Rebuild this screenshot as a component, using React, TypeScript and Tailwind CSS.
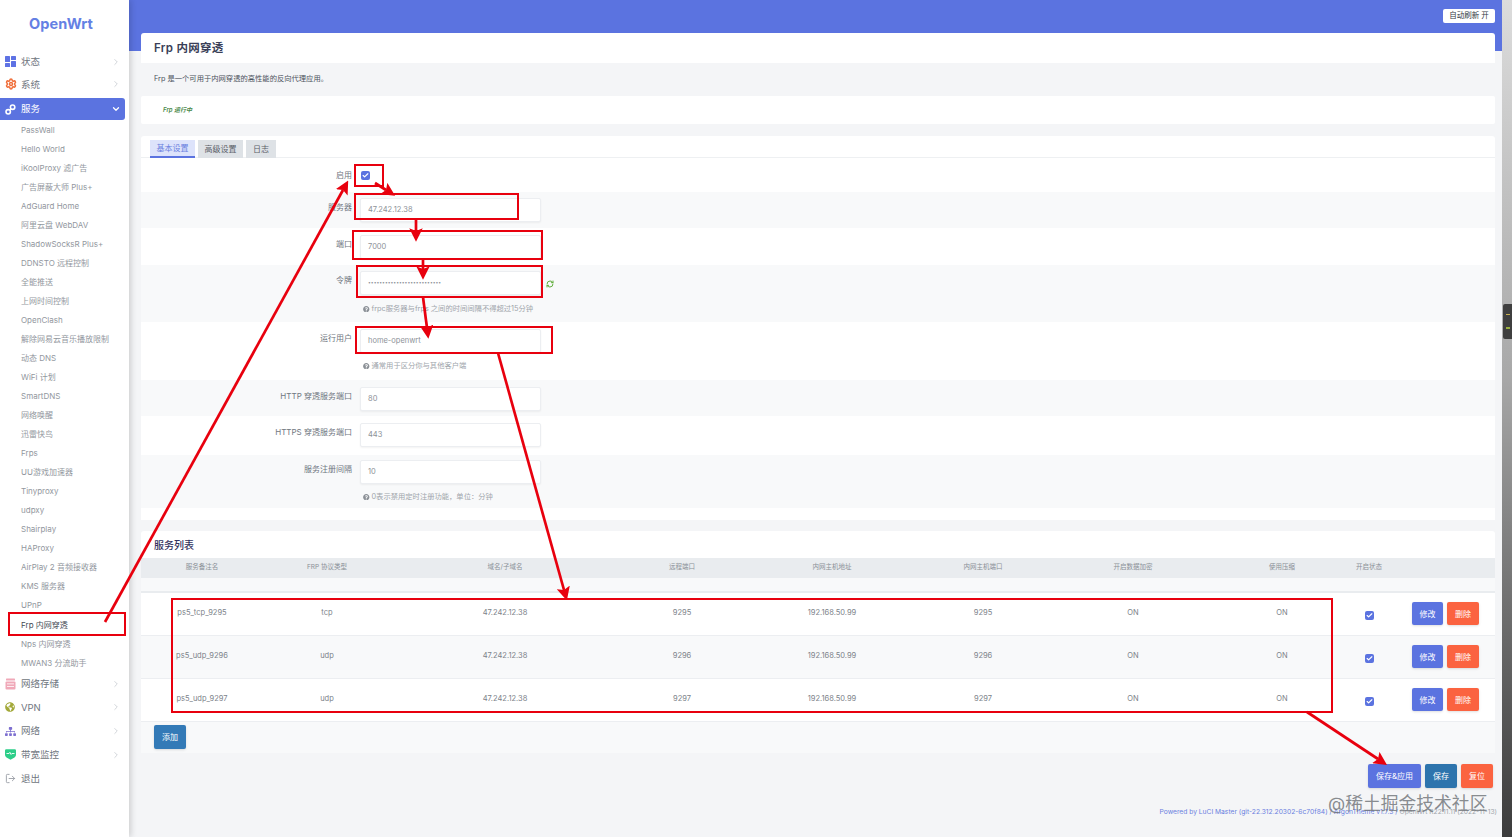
import { Check, ChevronDown, ChevronRight, LogOut, RefreshCw, Settings } from "lucide-react";
import { FaGlobeAmericas, FaQuestionCircle, FaSitemap } from "react-icons/fa";
import type { ReactNode } from "react";

const subItems = [
  "PassWall", "Hello World", "iKoolProxy 滤广告", "广告屏蔽大师 Plus+", "AdGuard Home", "阿里云盘 WebDAV",
  "ShadowSocksR Plus+", "DDNSTO 远程控制", "全能推送", "上网时间控制", "OpenClash", "解除网易云音乐播放限制",
  "动态 DNS", "WiFi 计划", "SmartDNS", "网络唤醒", "迅雷快鸟", "Frps", "UU游戏加速器", "Tinyproxy", "udpxy",
  "Shairplay", "HAProxy", "AirPlay 2 音频接收器", "KMS 服务器", "UPnP", "Frp 内网穿透", "Nps 内网穿透", "MWAN3 分流助手",
];

const columns = ["服务备注名", "FRP 协议类型", "域名/子域名", "远程端口", "内网主机地址", "内网主机端口", "开启数据加密", "使用压缩", "开启状态", ""];

const services = [
  { name: "ps5_tcp_9295", proto: "tcp", port: "9295", bg: "bg-white" },
  { name: "ps5_udp_9296", proto: "udp", port: "9296", bg: "bg-[#f8f9fa]" },
  { name: "ps5_udp_9297", proto: "udp", port: "9297", bg: "bg-white" },
];

const tableGrid = "grid grid-cols-[122px_128px_228px_126px_174px_128px_172px_126px_48px_102px] items-center text-center";

function DashIcon() {
  return (
    <svg width="11" height="11" viewBox="0 0 11 11" fill="#5e72e4">
      <rect x="0" y="0" width="5" height="6" rx="0.5" />
      <rect x="6" y="0" width="5" height="4" rx="0.5" />
      <rect x="0" y="7" width="5" height="4" rx="0.5" />
      <rect x="6" y="5" width="5" height="6" rx="0.5" />
    </svg>
  );
}

function LinkIcon() {
  return (
    <svg width="11" height="11" viewBox="0 0 11 11" fill="none" stroke="#fff" strokeWidth="1.6">
      <circle cx="7.6" cy="3.2" r="2.2" />
      <circle cx="3.2" cy="7.8" r="2.2" />
      <path d="M4.8 6.2 6 5" />
    </svg>
  );
}

function StorageIcon() {
  return (
    <svg width="11" height="12" viewBox="0 0 11 12" fill="#f0a8b8">
      <rect x="1" y="0.5" width="9" height="2" rx="0.6" />
      <rect x="0.5" y="3.5" width="10" height="8" rx="1" />
      <rect x="2" y="5.5" width="7" height="0.8" fill="#fff" />
      <rect x="2" y="8" width="7" height="0.8" fill="#fff" />
    </svg>
  );
}

function PulseShield() {
  return (
    <svg width="11" height="11" viewBox="0 0 11 11">
      <path d="M0 1.5A1.2 1.2 0 0 1 1.2.3h8.6A1.2 1.2 0 0 1 11 1.5V6q0 1.5-1.5 2.4L5.5 10.7 1.5 8.4Q0 7.5 0 6Z" fill="#2dce89" />
      <path d="M1.5 4.5h2.6l.8-1.2 1.2 2.2.8-1h2.6" fill="none" stroke="#fff" strokeWidth="0.9" />
    </svg>
  );
}

function TopItem({ icon, label, active, big }: { icon: ReactNode; label: string; active?: boolean; big?: boolean }) {
  return (
    <div
      className={`flex w-[125px] items-center pl-[5px] pr-[4px] ${big ? "h-[23.6px]" : "h-[22px]"} ${
        active ? "rounded-r-[3px] bg-[#5b73e0] text-white" : "text-[#6f7680]"
      }`}
    >
      <span className="flex w-[16px] shrink-0 items-center">{icon}</span>
      <span className="flex-1 text-[9.5px] leading-none">{label}</span>
      {active ? (
        <ChevronDown size={10} strokeWidth={3} />
      ) : (
        label !== "退出" && <ChevronRight size={10} strokeWidth={2} className="text-[#c9cdd2]" />
      )}
    </div>
  );
}

function Sidebar() {
  return (
    <aside className="relative z-10 flex w-[129px] shrink-0 flex-col bg-white pt-[50px] shadow-[2px_0_6px_rgba(0,0,0,0.16)]">
      <div className="absolute left-[29px] top-[14px] text-[14.5px] font-bold leading-[20px] tracking-[0.1px] text-[#6480e4]">OpenWrt</div>
      <TopItem big icon={<DashIcon />} label="状态" />
      <div className="-mt-[1px]">
        <TopItem big icon={<Settings size={12} strokeWidth={3} className="-ml-[0.5px] text-[#f0703c]" />} label="系统" />
      </div>
      <div className="mt-[2px]">
        <TopItem active icon={<LinkIcon />} label="服务" />
      </div>
      <ul>
        {subItems.map((item) => (
          <li
            key={item}
            className={`flex h-[19.04px] items-center whitespace-nowrap pl-[21px] text-[8px] leading-none ${
              item === "Frp 内网穿透" ? "text-[#444b55]" : "text-[#92979e]"
            }`}
          >
            {item}
          </li>
        ))}
      </ul>
      <TopItem big icon={<StorageIcon />} label="网络存储" />
      <TopItem big icon={<FaGlobeAmericas size={10} className="text-[#a3a93a]" />} label="VPN" />
      <TopItem big icon={<FaSitemap size={11} className="text-[#7d6fd0]" />} label="网络" />
      <TopItem big icon={<PulseShield />} label="带宽监控" />
      <TopItem big icon={<LogOut size={11} className="text-[#9a9fa6]" />} label="退出" />
    </aside>
  );
}

function Help({ children, mt = "mt-[8px]" }: { children: ReactNode; mt?: string }) {
  return (
    <div className={`flex items-center gap-[2px] whitespace-nowrap pl-[3px] text-[7.3px] leading-[10px] text-[#a0a5ab] ${mt}`}>
      <FaQuestionCircle size={6.5} className="text-[#8b9096]" />
      {children}
    </div>
  );
}

function Input({ value, small }: { value: string; small?: boolean }) {
  return (
    <div
      className={`flex h-[24px] w-[181px] items-center rounded-[2px] border border-[#eceef1] bg-white pl-[7px] text-[#8d9298] shadow-[0_1px_2px_rgba(0,0,0,0.05)] ${
        small ? "text-[5px]" : "text-[7.5px]"
      }`}
    >
      {value}
    </div>
  );
}

function FormRow({ label, className, children }: { label: string; className: string; children: ReactNode }) {
  return (
    <div className={`flex ${className}`}>
      <label className="w-[211px] shrink-0 pt-[4px] text-right text-[8px] leading-[10px] text-[#6f7680]">{label}</label>
      <div className="relative ml-[8px]">{children}</div>
    </div>
  );
}

function FormCard() {
  return (
    <section className="mt-[12px] rounded-t-[3px] bg-white">
      <div className="flex h-[22px] items-start gap-[3px] border-b border-[#eef0f2] pl-[9px] pt-[4px] text-[8px]">
        <span className="flex h-[18px] w-[45px] items-center justify-center border-b-2 border-[#5b73e0] bg-[#dde3fb] text-[#6a80e0]">基本设置</span>
        <span className="flex h-[18px] w-[45px] items-center justify-center bg-[#dee2e6] text-[#5b6168]">高级设置</span>
        <span className="flex h-[18px] w-[30px] items-center justify-center bg-[#dee2e6] text-[#5b6168]">日志</span>
      </div>
      <div className="flex h-[34px] items-start pt-[12px]">
        <label className="w-[211px] shrink-0 text-right text-[8px] leading-[10px] text-[#6f7680]">启用</label>
        <span className="ml-[9px] mt-[1px] flex h-[9px] w-[9px] items-center justify-center rounded-[2px] bg-[#5b73e0] text-white">
          <Check size={7} strokeWidth={4} />
        </span>
      </div>
      <FormRow label="服务器" className="h-[36px] bg-[#f8f9fa] pt-[6px]">
        <Input value="47.242.12.38" />
      </FormRow>
      <FormRow label="端口" className="h-[37px] bg-white pt-[7px]">
        <Input value="7000" />
      </FormRow>
      <FormRow label="令牌" className="h-[57px] bg-[#f8f9fa] pt-[6px]">
        <Input small value="••••••••••••••••••••••••••" />
        <RefreshCw size={8} strokeWidth={3} className="absolute left-[186px] top-[9px] text-[#5fae3a]" />
        <Help mt="mt-[9px]">frpc服务器与frps 之间的时间间隔不得超过15分钟</Help>
      </FormRow>
      <FormRow label="运行用户" className="h-[58px] bg-white pt-[7px]">
        <Input value="home-openwrt" />
        <Help>通常用于区分你与其他客户端</Help>
      </FormRow>
      <FormRow label="HTTP 穿透服务端口" className="h-[36px] bg-[#f8f9fa] pt-[7px]">
        <Input value="80" />
      </FormRow>
      <FormRow label="HTTPS 穿透服务端口" className="h-[39px] bg-white pt-[7px]">
        <Input value="443" />
      </FormRow>
      <FormRow label="服务注册间隔" className="h-[53px] bg-[#f8f9fa] pt-[5px]">
        <Input value="10" />
        <Help>0表示禁用定时注册功能，单位：分钟</Help>
      </FormRow>
      <div className="h-[12px]" />
    </section>
  );
}

function ServiceTable() {
  return (
    <section className="mt-[11px] rounded-t-[3px] bg-white">
      <h3 className="flex h-[27px] items-center pl-[13px] pt-[1px] text-[10px] font-medium text-[#32325d]">服务列表</h3>
      <div className={`${tableGrid} h-[20px] bg-[#e9ecef] text-[6.5px] text-[#8a9097]`}>
        {columns.map((c) => (
          <span key={c}>{c}</span>
        ))}
      </div>
      <div className="h-[15px] border-b-2 border-[#e9ecef] bg-[#f8f9fa]" />
      {services.map((s) => (
        <div key={s.name} className={`${tableGrid} h-[43px] border-b border-[#eceef1] text-[7.5px] text-[#7c8289] ${s.bg}`}>
          <span className="mb-[3px]">{s.name}</span>
          <span className="mb-[3px]">{s.proto}</span>
          <span className="mb-[3px]">47.242.12.38</span>
          <span className="mb-[3px]">{s.port}</span>
          <span className="mb-[3px]">192.168.50.99</span>
          <span className="mb-[3px]">{s.port}</span>
          <span className="mb-[3px]">ON</span>
          <span className="mb-[3px]">ON</span>
          <span className="mt-[2px] flex justify-center">
            <span className="flex h-[9px] w-[9px] items-center justify-center rounded-[2px] bg-[#5b73e0] text-white">
              <Check size={7} strokeWidth={4} />
            </span>
          </span>
          <span className="mb-[1px] flex gap-[4px] pl-[19px]">
            <button className="h-[23px] w-[31px] rounded-[2px] bg-[#5b73e0] text-[8px] text-white shadow-sm">修改</button>
            <button className="h-[23px] w-[32px] rounded-[2px] bg-[#fb6340] text-[8px] text-white shadow-sm">删除</button>
          </span>
        </div>
      ))}
      <div className="flex h-[31px] items-start bg-[#f8f9fa] pl-[13px] pt-[3px]">
        <button className="h-[24px] w-[32px] rounded-[2px] bg-[#337ab7] text-[8px] text-white shadow-sm">添加</button>
      </div>
    </section>
  );
}

function Annotations() {
  const boxes = [
    [355, 165, 28, 21],
    [355, 194, 163, 25],
    [353, 231, 189, 28],
    [357, 266, 185, 31],
    [356, 327, 196, 26],
    [9, 613, 116, 22],
    [172, 599, 1160, 113],
  ];
  const arrows = [
    [105, 622, 343, 190],
    [375, 183, 386, 190],
    [416, 219, 416, 231],
    [423, 259, 423, 269],
    [423, 297, 427, 328],
    [498, 353, 564, 590],
    [1307, 712, 1378, 759],
  ];
  return (
    <svg className="pointer-events-none absolute left-0 top-0 z-20 h-[837px] w-[1512px]" viewBox="0 0 1512 837">
      <defs>
        <marker id="head" markerWidth="5" markerHeight="5" refX="1" refY="2.5" orient="auto" markerUnits="strokeWidth">
          <path d="M0 0 5 2.5 0 5 1 2.5Z" fill="#e8000e" />
        </marker>
      </defs>
      {boxes.map(([x, y, w, h]) => (
        <rect key={`${x}-${y}`} x={x} y={y} width={w} height={h} fill="none" stroke="#e8000e" strokeWidth="2" />
      ))}
      {arrows.map(([x1, y1, x2, y2]) => (
        <line key={`${x1}-${y1}`} x1={x1} y1={y1} x2={x2} y2={y2} stroke="#e8000e" strokeWidth="2.7" markerEnd="url(#head)" />
      ))}
    </svg>
  );
}

export default function App() {
  return (
    <div className="relative flex h-[837px] w-full overflow-hidden bg-[#f4f5f7] font-['Inter','Noto_Sans_CJK_SC',sans-serif]">
      <Sidebar />

      <main className="flex min-w-0 flex-1 flex-col">
        <header className="flex h-[51px] shrink-0 items-start justify-end bg-[#5b73e0] pr-[7px] pt-[9px]">
          <button className="h-[14px] w-[52px] rounded-[2px] bg-white text-[7.5px] leading-none text-[#333a44]">自动刷新 开</button>
        </header>

        <div className="relative -mt-[18px] pl-[12px] pr-[7px]">
          <div className="flex h-[30px] items-center rounded-t-[3px] bg-white pl-[13px] pt-[2px] text-[11.5px] font-semibold tracking-[0.3px] text-[#3a3f58]">Frp 内网穿透</div>
          <p className="flex h-[33px] items-center pl-[13px] text-[7.3px] text-[#4b525c]">Frp 是一个可用于内网穿透的高性能的反向代理应用。</p>
          <div className="flex h-[28px] items-center rounded-[2px] bg-white pb-[1px] pl-[22px] text-[6px] font-semibold italic text-[#4c8a4c]">Frp 运行中</div>

          <FormCard />
          <ServiceTable />

          <div className="mt-[11px] flex justify-end gap-[4px] pr-[2px]">
            <button className="h-[24px] w-[53px] rounded-[2px] bg-[#5b73e0] text-[8px] text-white shadow-sm">保存&应用</button>
            <button className="h-[24px] w-[32px] rounded-[2px] bg-[#2d74ad] text-[8px] text-white shadow-sm">保存</button>
            <button className="h-[24px] w-[32px] rounded-[2px] bg-[#fb6340] text-[8px] text-white shadow-sm">复位</button>
          </div>

          <footer className="-mr-[2px] mt-[19px] whitespace-nowrap text-right text-[6.7px] leading-[10px] text-[#a0a5ab]">
            <span className="text-[#6a7fe0]">Powered by LuCI Master (git-22.312.20302-6c70f84) / ArgonTheme v1.7.3 /</span> OpenWrt R22.11.11 (2022-11-13)
          </footer>
        </div>
      </main>

      <div className="relative w-[10px] shrink-0 bg-linear-to-b from-[#dcdcdc] via-[#a8a8a8] via-45% to-[#3c3c3c]">
        <div className="absolute left-[1px] top-[304px] flex h-[35px] w-[9px] flex-col items-center justify-around rounded-l-[2px] bg-[#3f3f3f] py-[4px]">
          <span className="h-[1px] w-[4px] bg-[#c8b050]" />
          <span className="h-[2px] w-[4px] bg-[#9ab040]" />
        </div>
      </div>

      <div className="absolute left-[1328px] top-[793px] z-20 whitespace-nowrap text-[17.8px] leading-[22px] text-[#6b6f74]/80">@稀土掘金技术社区</div>
      <Annotations />
    </div>
  );
}
